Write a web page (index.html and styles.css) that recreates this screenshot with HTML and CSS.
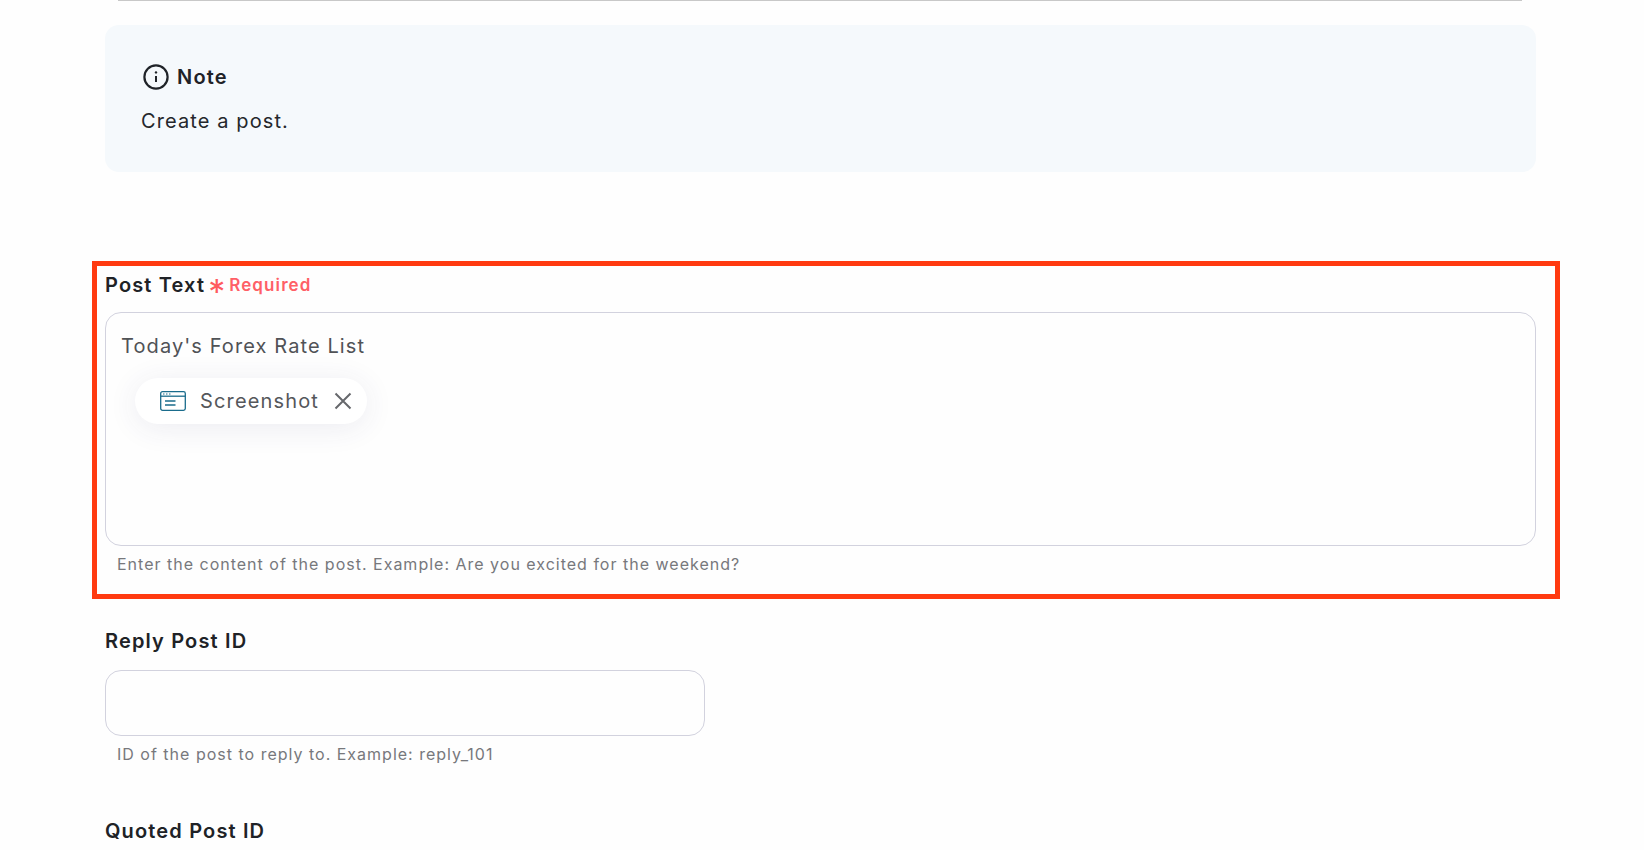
FILE: index.html
```html
<!DOCTYPE html>
<html lang="en">
<head>
<meta charset="utf-8">
<title>Create a post</title>
<link rel="stylesheet" href="styles.css">
</head>
<body>
<div class="page">
  <div class="top-rule"></div>
  <section class="note">
    <div class="note-head">
      <svg class="info" viewBox="0 0 26 26" width="26" height="26" fill="none" stroke="#1f2328" stroke-width="2.2">
        <circle cx="13" cy="13" r="11.6"/>
        <path d="M13 12v6" stroke-width="2"/>
        <circle cx="13" cy="8.4" r="1.2" fill="#1f2328" stroke="none"/>
      </svg>
      <span>Note</span>
    </div>
    <p class="note-text">Create a post.</p>
  </section>

  <section class="field first">
    <div class="label-row">
      <label class="label">Post Text</label>
      <span class="star">*</span>
      <span class="req">Required</span>
    </div>
    <div class="box textarea">
      <div class="value">Today's Forex Rate List</div>
      <div class="chip">
        <svg viewBox="0 0 26 20" width="26" height="20" fill="none" stroke="#1a6c8c" stroke-width="1.3">
          <rect x="0.7" y="0.7" width="24.6" height="18.6" rx="1.8"/>
          <path d="M0.7 5.2h24.6"/>
          <path d="M3 3h1.5M6 3h1.5M9 3h1.5" stroke-width="1"/>
          <path d="M5 10h10.5M5 14h10.5"/>
        </svg>
        <span class="chip-text">Screenshot</span>
        <svg viewBox="0 0 18 18" width="18" height="18" fill="none" stroke="#66686c" stroke-width="2">
          <path d="M1.5 1.5l15 15M16.5 1.5l-15 15"/>
        </svg>
      </div>
    </div>
    <p class="help">Enter the content of the post. Example: Are you excited for the weekend?</p>
    <div class="highlight"></div>
  </section>

  <section class="field second">
    <label class="label">Reply Post ID</label>
    <div class="box input"></div>
    <p class="help">ID of the post to reply to. Example: reply_101</p>
  </section>

  <section class="field third">
    <label class="label">Quoted Post ID</label>
  </section>
</div>
</body>
</html>
```
FILE: styles.css
```css
* { box-sizing: border-box; }
html, body { margin: 0; height: 100%; }
body {
  background: #fefefe;
  font-family: Inter, "Liberation Sans", sans-serif;
  color: #1f2328;
  overflow: hidden;
}
.page { width: 1644px; height: 850px; padding: 0 108px 0 105px; overflow: hidden; }
.top-rule { height: 1px; margin: 0 14px 0 13px; background: #c8c8c8; }
.note {
  margin-top: 24px;
  height: 147px;
  background: #f5f9fc;
  border-radius: 14px;
  padding: 39px 35px 0 36px;
}
.note-head { display: flex; align-items: center; gap: 8px; font-size: 20px; font-weight: 600; letter-spacing: 1.2px; line-height: 26px; margin-left: 2px; }
.note-text { margin: 17px 0 0; font-size: 20px; line-height: 28px; letter-spacing: 1.1px; color: #24272b; }
.field { position: relative; }
.first { margin-top: 99px; }
.label { display: block; font-size: 20px; font-weight: 600; line-height: 28px; letter-spacing: 1.15px; color: #202226; }
.label-row { display: flex; align-items: center; height: 28px; }
.star { color: #ff5a5f; font-size: 34px; font-weight: 400; line-height: 28px; height: 28px; margin-left: 3px; padding-top: 7px; }
.req { color: #ff5f66; font-size: 17px; font-weight: 600; letter-spacing: 1.1px; margin-left: 4px; }
.box { border: 1px solid #d2d2de; background: #fefefe; border-radius: 16px; }
.textarea { margin-top: 13px; height: 234px; padding: 20px 15px; }
.value { font-size: 20px; line-height: 26px; letter-spacing: 1.1px; color: #505256; }
.chip {
  display: inline-flex; align-items: center;
  margin: 19px 0 0 14px; padding: 0 15px 0 25px; height: 46px; gap: 14px;
  background: #fff; border-radius: 23px;
  box-shadow: 0 4px 30px rgba(60, 50, 110, .09);
}
.chip-text { font-size: 20px; letter-spacing: 1.15px; color: #55575b; margin-right: 1px; }
.help { margin: 0 0 0 12px; padding-top: 6px; font-size: 16px; line-height: 24px; letter-spacing: 1px; color: #77787c; }
.highlight {
  position: absolute; left: -13px; right: -24px; top: -10px; bottom: -23px;
  border: 5px solid #ff3a10; pointer-events: none;
}
.second { margin-top: 51px; }
.input { margin-top: 15px; width: 600px; height: 66px; }
.third { margin-top: 51px; }
```
